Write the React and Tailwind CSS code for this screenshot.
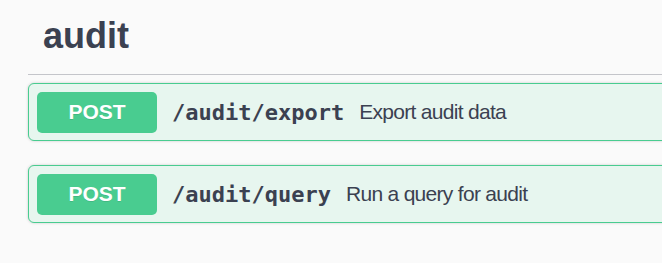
export default function App() {
  const ops = [
    { path: "/audit/export", desc: "Export audit data" },
    { path: "/audit/query", desc: "Run a query for audit" },
  ];
  return (
    <div className="w-[662px] h-[263px] overflow-hidden bg-[#fafafa]">
      <div className="ml-[28px] w-[700px]">
        <div className="h-[75px] flex items-center pl-[15px] border-b border-[#c4c5ca]">
          <h2 className="text-[36px] font-bold text-[#3b4151] font-['Liberation_Sans',Arial,sans-serif] leading-none pb-[2px]">
            audit
          </h2>
        </div>
        <div className="mt-[8px] flex flex-col gap-[24px]">
          {ops.map((op) => (
            <div
              key={op.path}
              className="h-[58px] flex items-center border border-[#49cc90] bg-[#e7f6ef] rounded-[6px] shadow-[0_0_3px_rgba(0,0,0,0.19)] pl-[8px]"
            >
              <div className="w-[120px] h-[41px] rounded-[5px] bg-[#49cc90] flex items-center justify-center text-white font-bold text-[21px] font-['Liberation_Sans',Arial,sans-serif] text-shadow-[0_1px_0_rgba(0,0,0,0.1)]">
                POST
              </div>
              <span className="ml-[15px] font-['DejaVu_Sans_Mono',monospace] font-bold text-[22px] text-[#3b4151]">
                {op.path}
              </span>
              <span className="ml-[15px] font-['Liberation_Sans',Arial,sans-serif] text-[21px] tracking-[-0.7px] text-[#3b4151]">
                {op.desc}
              </span>
            </div>
          ))}
        </div>
      </div>
    </div>
  );
}
